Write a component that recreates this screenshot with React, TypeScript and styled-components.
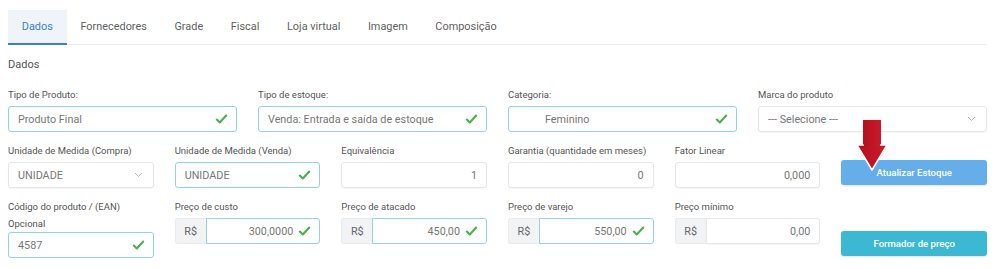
import React from "react";
import styled, { createGlobalStyle } from "styled-components";

const Global = createGlobalStyle`
  html, body { margin: 0; padding: 0; background: #fff; }
  body { font-family: Roboto, "Noto Sans", Arial, sans-serif; -webkit-font-smoothing: antialiased; }
  * { box-sizing: border-box; }
`;

const Page = styled.div`
  position: relative;
  width: 1000px;
  height: 269px;
  padding: 10px 13px 0 8px;
  overflow: hidden;
`;

const TabBar = styled.nav`
  display: flex;
  height: 35px;
  border-bottom: 1px solid #ececec;
`;

const Tab = styled.div<{ $active?: boolean }>`
  display: flex;
  align-items: center;
  padding: 0 13.8px;
  font-size: 10.9px;
  color: ${(p) => (p.$active ? "#3b7fce" : "#5f5f5f")};
  background: ${(p) => (p.$active ? "#eef4fa" : "transparent")};
  border-bottom: 2px solid ${(p) => (p.$active ? "#3b7fce" : "transparent")};
  margin-bottom: -1px;
  height: 35px;
`;

const Heading = styled.div`
  margin-top: 11px;
  font-size: 11px;
  line-height: 17px;
  color: #555;
  margin-bottom: 13px;
`;

const Row = styled.div`
  display: grid;
  grid-template-columns: repeat(12, 1fr);
  column-gap: 21px;
  margin-bottom: 10px;
  align-items: start;
`;

const Field = styled.div<{ $span: number }>`
  grid-column: span ${(p) => p.$span};
  display: flex;
  flex-direction: column;
  min-width: 0;
`;

const Label = styled.label<{ $mb?: number }>`
  font-size: 9.5px;
  line-height: 17px;
  color: #555;
  margin-bottom: ${(p) => p.$mb ?? 3}px;
`;

const Box = styled.div<{ $valid?: boolean; $right?: boolean; $indent?: number; $flat?: boolean }>`
  position: relative;
  flex: 1;
  height: 26px;
  display: flex;
  align-items: center;
  justify-content: ${(p) => (p.$right ? "flex-end" : "flex-start")};
  padding: 0 ${(p) => (p.$right ? (p.$valid ? "26px" : "9px") : "26px")} 0 ${(p) => p.$indent ?? 9}px;
  border: 1px solid ${(p) => (p.$valid ? "#92d3df" : "#e4e6e8")};
  border-radius: ${(p) => (p.$flat ? "0 3px 3px 0" : "3px")};
  background: #fff;
  font-size: 10.8px;
  color: #777;
  white-space: nowrap;
  box-shadow: ${(p) => (p.$valid ? "none" : "0 1px 2px rgba(0,0,0,0.04)")};
`;

const Group = styled.div`
  display: flex;
  height: 26px;
`;

const Addon = styled.div`
  width: 31px;
  height: 26px;
  display: flex;
  align-items: center;
  justify-content: center;
  background: #f1f3f5;
  border: 1px solid #e8eaec;
  border-right: none;
  border-radius: 3px 0 0 3px;
  font-size: 10.8px;
  color: #666;
`;

const Icon = styled.span`
  position: absolute;
  right: 8px;
  top: 50%;
  transform: translateY(-50%);
  display: flex;
`;

const Button = styled.button<{ $bg: string; $mb: number }>`
  grid-column: span 2;
  align-self: end;
  margin-bottom: ${(p) => p.$mb}px;
  height: 25px;
  border: none;
  border-radius: 3px;
  background: ${(p) => p.$bg};
  color: #fff;
  font-family: Roboto, Arial, sans-serif;
  font-size: 9.6px;
  font-weight: 500;
  box-shadow: 0 1px 2px rgba(0,0,0,0.12);
`;

const ArrowWrap = styled.div`
  position: absolute;
  left: 855px;
  top: 118px;
  width: 34px;
  height: 56px;
`;

const Check = () => (
  <Icon>
    <svg width="13" height="11" viewBox="0 0 13 11">
      <path d="M1.8 6 L4.8 9 L11.2 2" fill="none" stroke="#4caf50" strokeWidth="2.1" strokeLinecap="round" strokeLinejoin="round" />
    </svg>
  </Icon>
);

const Chevron = () => (
  <Icon style={{ right: 10 }}>
    <svg width="9" height="6" viewBox="0 0 9 6">
      <path d="M1 1 L4.5 4.5 L8 1" fill="none" stroke="#b5b5b5" strokeWidth="1" />
    </svg>
  </Icon>
);

type Inp = { label: React.ReactNode; value: string; valid?: boolean; right?: boolean; select?: boolean; indent?: number; span: number; prefix?: boolean; labelMb?: number };

const Input = ({ label, value, valid, right, select, indent, span, prefix, labelMb }: Inp) => (
  <Field $span={span}>
    <Label $mb={labelMb}>{label}</Label>
    {prefix ? (
      <Group>
        <Addon>R$</Addon>
        <Box $valid={valid} $right={right} $flat>
          {value}
          {valid && <Check />}
        </Box>
      </Group>
    ) : (
      <Box $valid={valid} $right={right} $indent={indent} style={{ flex: "none" }}>
        {value}
        {valid && <Check />}
        {select && <Chevron />}
      </Box>
    )}
  </Field>
);

const tabs = ["Dados", "Fornecedores", "Grade", "Fiscal", "Loja virtual", "Imagem", "Composição"];

export default function App() {
  return (
    <>
      <Global />
      <Page>
        <TabBar>
          {tabs.map((t, i) => (
            <Tab key={t} $active={i === 0}>{t}</Tab>
          ))}
        </TabBar>
        <Heading>Dados</Heading>
        <Row>
          <Input span={3} label="Tipo de Produto:" value="Produto Final" valid />
          <Input span={3} label="Tipo de estoque:" value="Venda: Entrada e saída de estoque" valid />
          <Input span={3} label="Categoria:" value="Feminino" valid indent={36} />
          <Input span={3} label="Marca do produto" value="--- Selecione ---" select />
        </Row>
        <Row>
          <Input span={2} label="Unidade de Medida (Compra)" value="UNIDADE" select />
          <Input span={2} label="Unidade de Medida (Venda)" value="UNIDADE" valid />
          <Input span={2} label="Equivalência" value="1" right />
          <Input span={2} label="Garantia (quantidade em meses)" value="0" right />
          <Input span={2} label="Fator Linear" value="0,000" right />
          <Button $bg="#65aeea" $mb={3}>Atualizar Estoque</Button>
        </Row>
        <Row>
          <Input span={2} label={<>Código do produto / (EAN)<br />Opcional</>} value="4587" valid labelMb={0} />
          <Input span={2} label="Preço de custo" value="300,0000" valid right prefix />
          <Input span={2} label="Preço de atacado" value="450,00" valid right prefix />
          <Input span={2} label="Preço de varejo" value="550,00" valid right prefix />
          <Input span={2} label="Preço mínimo" value="0,00" right prefix />
          <Button $bg="#3cb8d2" $mb={2}>Formador de preço</Button>
        </Row>
        <ArrowWrap>
          <svg width="34" height="56" viewBox="0 0 34 56">
            <defs>
              <linearGradient id="ag" x1="0" y1="0" x2="1" y2="0">
                <stop offset="0" stopColor="#b3101e" />
                <stop offset="1" stopColor="#cc1a2a" />
              </linearGradient>
            </defs>
            <rect x="8" y="2" width="18" height="27" fill="url(#ag)" />
            <polygon points="2,27 32,27 17,52" fill="url(#ag)" stroke="#ffffff" strokeWidth="1.5" strokeLinejoin="round" />
            <rect x="8.8" y="26" width="16.4" height="3" fill="url(#ag)" />
          </svg>
        </ArrowWrap>
      </Page>
    </>
  );
}
